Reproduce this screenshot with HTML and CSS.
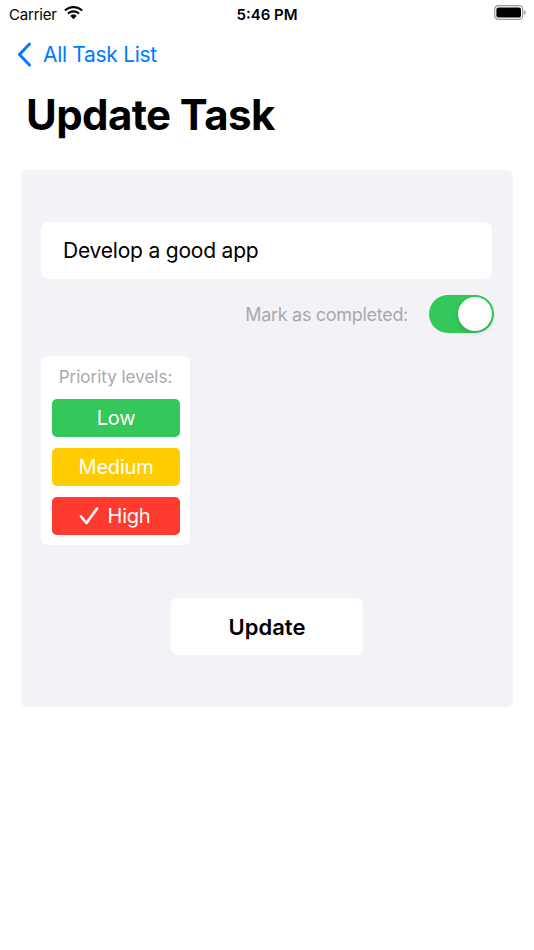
FILE: index.html
```html
<!DOCTYPE html>
<html lang="en">
<head>
<meta charset="UTF-8">
<title>Update Task</title>
<link rel="stylesheet" href="styles.css">
</head>
<body>

<div class="status-bar">
  <div class="status-left">
    <span class="carrier">Carrier</span>
    <svg class="wifi" width="19" height="14" viewBox="0 0 19 14">
      <path d="M9.5 0C5.9 0 2.6 1.4 0.2 3.7L1.7 5.3C3.7 3.4 6.5 2.2 9.5 2.2C12.5 2.2 15.3 3.4 17.3 5.3L18.8 3.7C16.4 1.4 13.1 0 9.5 0Z" fill="#000"/>
      <path d="M9.5 4.3C7.1 4.3 4.9 5.2 3.3 6.8L4.8 8.4C6 7.2 7.7 6.5 9.5 6.5C11.3 6.5 13 7.2 14.2 8.4L15.7 6.8C14.1 5.2 11.9 4.3 9.5 4.3Z" fill="#000"/>
      <path d="M9.5 8.6C8.3 8.6 7.2 9.1 6.4 9.9L9.5 13.2L12.6 9.9C11.8 9.1 10.7 8.6 9.5 8.6Z" fill="#000"/>
    </svg>
  </div>
  <span class="time">5:46 PM</span>
  <div class="status-right">
    <svg class="battery" width="33" height="15" viewBox="0 0 33 15">
      <rect x="0.7" y="0.7" width="28" height="13.6" rx="3.6" fill="none" stroke="#999" stroke-width="1.2"/>
      <rect x="2.4" y="2.4" width="24.6" height="10.2" rx="2.2" fill="#000"/>
      <path d="M30.3 5v5c0.9-0.3 1.5-1.4 1.5-2.5S31.2 5.3 30.3 5Z" fill="#999"/>
    </svg>
  </div>
</div>

<div class="nav">
  <a class="back" href="#">
    <svg class="chevron" width="15" height="25" viewBox="0 0 15 25">
      <path d="M12.5 2L2.5 12.5L12.5 23" fill="none" stroke="#007aff" stroke-width="3" stroke-linecap="round" stroke-linejoin="round"/>
    </svg>
    <span>All Task List</span>
  </a>
</div>

<h1 class="title">Update Task</h1>

<div class="panel">
  <div class="task-field">Develop a good app</div>

  <div class="completed-row">
    <span class="completed-label">Mark as completed:</span>
    <div class="switch"><div class="knob"></div></div>
  </div>

  <div class="priority-box">
    <div class="priority-label">Priority levels:</div>
    <button class="prio prio-low">Low</button>
    <button class="prio prio-medium">Medium</button>
    <button class="prio prio-high">
      <svg class="check" width="20" height="20" viewBox="0 0 20 20">
        <path d="M2 10.5L7.5 17L18 2.5" fill="none" stroke="#fff" stroke-width="2.6" stroke-linecap="round" stroke-linejoin="round"/>
      </svg>
      <span>High</span>
    </button>
  </div>

  <div class="update-row">
    <button class="update-btn">Update</button>
  </div>
</div>

</body>
</html>
```

FILE: styles.css
```css
body {
  font-family: Inter, "Noto Sans", "Liberation Sans", sans-serif;
  background-color: #fff;
  color: #000;
  margin: 0;
  padding: 0;
}

/* barra de status */
.status-bar {
  height: 28px;
  display: flex;
  align-items: center;
  justify-content: space-between;
  padding: 0 7px 0 9px;
  position: relative;
}
.status-left {
  display: flex;
  align-items: center;
  gap: 7px;
}
.carrier {
  font-size: 15px;
  letter-spacing: -0.2px;
}
.wifi {
  margin-top: -2px;
}
.time {
  position: absolute;
  left: 0;
  right: 0;
  text-align: center;
  font-size: 15px;
  font-weight: 600;
  pointer-events: none;
}
.battery {
  margin-top: -1px;
}

/* navegacao */
.nav {
  height: 52px;
  display: flex;
  align-items: center;
  padding-left: 17px;
}
.back {
  display: flex;
  align-items: center;
  gap: 11px;
  text-decoration: none;
  color: #007aff;
  font-size: 21px;
  letter-spacing: -0.3px;
}
.chevron {
  margin-top: 1px;
}

.title {
  font-size: 42px;
  font-weight: 700;
  letter-spacing: -0.6px;
  margin: 10px 0 0 26px;
  line-height: 50px;
}

/* painel principal */
.panel {
  background-color: #f2f2f7;
  margin: 30px 21px 0 21px;
  padding: 52px 21px 52px 20px;
  border-radius: 6px;
}
.task-field {
  background-color: #fff;
  height: 57px;
  border-radius: 7px;
  display: flex;
  align-items: center;
  padding-left: 22px;
  font-size: 21px;
  letter-spacing: -0.2px;
}
.completed-row {
  display: flex;
  justify-content: flex-end;
  align-items: center;
  gap: 21px;
  margin-top: 16px;
  margin-right: -2px;
}
.completed-label {
  color: #a9a9ad;
  font-size: 18px;
  letter-spacing: -0.3px;
}
.switch {
  width: 65px;
  height: 38px;
  border-radius: 19px;
  background-color: #34c759;
  position: relative;
}
.knob {
  position: absolute;
  right: 2px;
  top: 2px;
  width: 34px;
  height: 34px;
  border-radius: 50%;
  background-color: #fff;
  box-shadow: 0 2px 5px rgba(0,0,0,0.15);
}

.priority-box {
  margin-top: 23px;
  width: 149px;
  box-sizing: border-box;
  background-color: #fff;
  border-radius: 6px;
  padding: 10px 10px 10px 11px;
  display: flex;
  flex-direction: column;
  gap: 11px;
}
.priority-label {
  color: #a9a9ad;
  font-size: 17px;
  line-height: 22px;
  text-align: center;
  margin-left: -1px;
}
.prio {
  height: 38px;
  border: none;
  border-radius: 5px;
  color: #fff;
  font-family: inherit;
  font-size: 20px;
  letter-spacing: -0.2px;
  padding: 0;
  cursor: pointer;
  display: flex;
  align-items: center;
  justify-content: center;
}
.prio-low {
  background-color: #34c759;
}
.prio-medium {
  background-color: #ffcc00;
}
.prio-high {
  background-color: #ff3b30;
  gap: 9px;
}
.check {
  margin-left: -3px;
}

.update-row {
  display: flex;
  justify-content: center;
  margin-top: 53px;
  margin-left: 1px;
}
.update-btn {
  width: 192px;
  height: 57px;
  border: none;
  border-radius: 6px;
  background-color: #fff;
  font-family: inherit;
  font-size: 22px;
  font-weight: 600;
  color: #000;
  cursor: pointer;
}
```
